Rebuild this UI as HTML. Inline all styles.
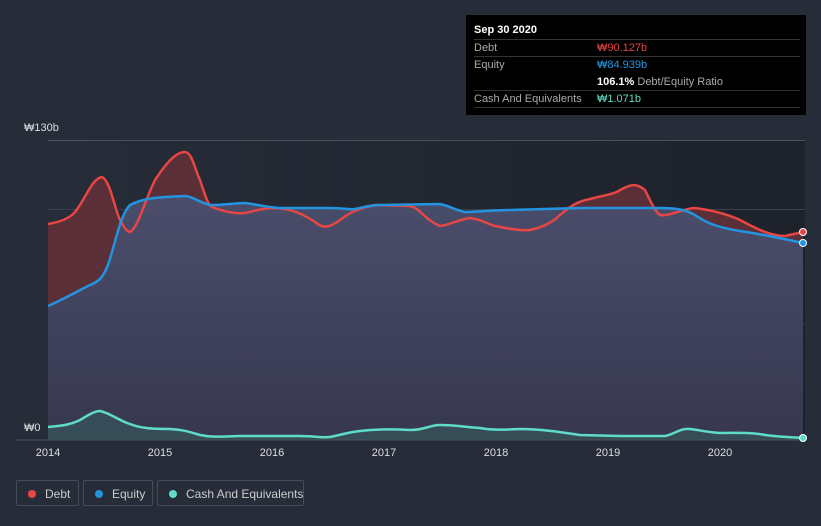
<!DOCTYPE html>
<html><head><meta charset="utf-8"><style>
body{margin:0;width:821px;height:526px;background:#262c38;font-family:"Liberation Sans","Noto Sans CJK KR",sans-serif;overflow:hidden;position:relative}
.tt{position:absolute;left:466px;top:15px;width:340px;height:100px;background:#000;color:#fff;font-size:11px}
.tt .r{position:absolute;left:8px;right:6px;border-top:1px solid #333;height:17px;line-height:17px;color:#aaa}
.leg{position:absolute;top:480px;height:26px;border:1px solid #454c5a;border-radius:2px;color:#ccc;font-size:12px;line-height:26px;box-sizing:border-box;white-space:nowrap}
.leg i{position:absolute;left:11px;top:9px;width:8px;height:8px;border-radius:50%}
.leg span{position:absolute;left:28px}
.yr{position:absolute;top:447px;color:#ddd;font-size:11px;width:40px;text-align:center}
</style></head><body>
<svg width="821" height="526" style="position:absolute;left:0;top:0">
<defs>
<linearGradient id="bg" x1="0" y1="0" x2="1" y2="0"><stop offset="0" stop-color="#262c38"/><stop offset="1" stop-color="#1d222b"/></linearGradient>
<linearGradient id="eq" x1="0" y1="0" x2="0" y2="1"><stop offset="0" stop-color="#4a4f6e"/><stop offset="1" stop-color="#353850"/></linearGradient>
</defs>
<rect x="48" y="140" width="757" height="300" fill="url(#bg)"/>
<line x1="48" y1="140.5" x2="805" y2="140.5" stroke="#4a505c"/>
<line x1="48" y1="209.5" x2="805" y2="209.5" stroke="#3a404c"/>
<line x1="48" y1="324.5" x2="805" y2="324.5" stroke="#3a404c"/>
<path d="M48,224 C60,222 70,218 75,212 C85,200 92,178 102,177 C110,180 115,210 120,220 C125,230 128,232 130,232 C138,228 145,200 155,180 C165,165 175,152 185,152 C192,152 195,170 200,180 C205,195 208,205 212,207 C225,212 235,214 245,213 C255,211 262,208 275,208 C290,209 300,212 315,222 C322,228 328,229 340,220 C350,212 360,208 375,205 L410,206 C420,208 425,220 440,226 C450,225 460,219 470,218 C480,219 488,224 495,226 C505,228 520,231 530,230 C545,227 555,220 560,215 C570,207 575,202 590,199 C605,195 615,194 620,190 C630,185 635,182 645,190 C650,200 655,212 660,215 C668,217 685,208 695,208 C710,210 725,213 740,220 C755,228 770,236 785,236 L803,232 L803,438 L48,438 Z" fill="#5a2f38"/>
<path d="M48,306 C60,301 80,290 90,285 C100,281 103,277 108,265 C115,245 120,215 130,205 C140,200 150,198 165,197 L185,196 C192,196 198,202 210,205 C225,205 235,203 245,203 C255,204 265,207 280,208 L330,208 C345,208 350,210 355,209 C365,207 370,205 380,205 L440,204 C450,206 455,210 465,212 C475,212 495,210 510,210 L580,208 L660,208 C680,208 688,211 695,215 C705,222 715,227 740,231 C760,234 780,238 803,243 L803,438 L48,438 Z" fill="url(#eq)" opacity="0.95"/>
<path d="M48,427 C60,426 70,425 80,420 C90,414 95,411 100,411 C110,413 120,421 130,424 C140,428 150,429 170,429 C185,430 190,432 200,435 C210,437 215,437 240,436 L300,436 C315,436 320,438 330,437 C340,435 350,432 360,431 C375,429 390,429 410,430 C425,430 430,425 440,425 C455,425 465,427 480,428 C490,430 500,430 520,429 C540,429 560,432 580,435 L620,436 L665,436 C675,434 680,428 690,429 C700,430 705,432 720,433 C735,433 750,432 765,435 C780,437 790,437 803,438 L803,440 L48,440 Z" fill="#365059" opacity="0.9"/>
<path d="M48,224 C60,222 70,218 75,212 C85,200 92,178 102,177 C110,180 115,210 120,220 C125,230 128,232 130,232 C138,228 145,200 155,180 C165,165 175,152 185,152 C192,152 195,170 200,180 C205,195 208,205 212,207 C225,212 235,214 245,213 C255,211 262,208 275,208 C290,209 300,212 315,222 C322,228 328,229 340,220 C350,212 360,208 375,205 L410,206 C420,208 425,220 440,226 C450,225 460,219 470,218 C480,219 488,224 495,226 C505,228 520,231 530,230 C545,227 555,220 560,215 C570,207 575,202 590,199 C605,195 615,194 620,190 C630,185 635,182 645,190 C650,200 655,212 660,215 C668,217 685,208 695,208 C710,210 725,213 740,220 C755,228 770,236 785,236 L803,232" fill="none" stroke="#e84545" stroke-width="2.5"/>
<path d="M48,306 C60,301 80,290 90,285 C100,281 103,277 108,265 C115,245 120,215 130,205 C140,200 150,198 165,197 L185,196 C192,196 198,202 210,205 C225,205 235,203 245,203 C255,204 265,207 280,208 L330,208 C345,208 350,210 355,209 C365,207 370,205 380,205 L440,204 C450,206 455,210 465,212 C475,212 495,210 510,210 L580,208 L660,208 C680,208 688,211 695,215 C705,222 715,227 740,231 C760,234 780,238 803,243" fill="none" stroke="#2394e0" stroke-width="2.5"/>
<path d="M48,427 C60,426 70,425 80,420 C90,414 95,411 100,411 C110,413 120,421 130,424 C140,428 150,429 170,429 C185,430 190,432 200,435 C210,437 215,437 240,436 L300,436 C315,436 320,438 330,437 C340,435 350,432 360,431 C375,429 390,429 410,430 C425,430 430,425 440,425 C455,425 465,427 480,428 C490,430 500,430 520,429 C540,429 560,432 580,435 L620,436 L665,436 C675,434 680,428 690,429 C700,430 705,432 720,433 C735,433 750,432 765,435 C780,437 790,437 803,438" fill="none" stroke="#5fdcc8" stroke-width="2.5"/>
<line x1="16" y1="440" x2="805" y2="440" stroke="#4a505c"/>
<circle cx="803" cy="232" r="3.5" fill="#e84545" stroke="#fff" stroke-width="1"/>
<circle cx="803" cy="243" r="3.5" fill="#2394e0" stroke="#fff" stroke-width="1"/>
<circle cx="803" cy="438" r="3.5" fill="#5fdcc8" stroke="#fff" stroke-width="1"/>
</svg>
<div style="position:absolute;left:24px;top:122px;color:#ddd;font-size:11px">₩130b</div>
<div style="position:absolute;left:24px;top:422px;color:#ddd;font-size:11px">₩0</div>
<div class="yr" style="left:28px">2014</div><div class="yr" style="left:140px">2015</div><div class="yr" style="left:252px">2016</div><div class="yr" style="left:364px">2017</div><div class="yr" style="left:476px">2018</div><div class="yr" style="left:588px">2019</div><div class="yr" style="left:700px">2020</div>
<div class="tt">
<div style="position:absolute;left:8px;top:9px;font-weight:bold">Sep 30 2020</div>
<div class="r" style="top:24px">Debt<span style="position:absolute;left:123px;color:#e84545">₩90.127b</span></div>
<div class="r" style="top:41px">Equity<span style="position:absolute;left:123px;color:#2394e0">₩84.939b</span></div>
<div style="position:absolute;left:131px;top:59px;color:#aaa;line-height:17px"><b style="color:#fff">106.1%</b> Debt/Equity Ratio</div>
<div class="r" style="top:75px">Cash And Equivalents<span style="position:absolute;left:123px;color:#5fdcc8">₩1.071b</span></div>
<div class="r" style="top:92px;height:0"></div>
</div>
<div class="leg" style="left:16px;width:63px"><i style="background:#e84545"></i><span>Debt</span></div>
<div class="leg" style="left:83px;width:70px"><i style="background:#2394e0"></i><span>Equity</span></div>
<div class="leg" style="left:157px;width:147px"><i style="background:#5fdcc8"></i><span>Cash And Equivalents</span></div>
</body></html>
